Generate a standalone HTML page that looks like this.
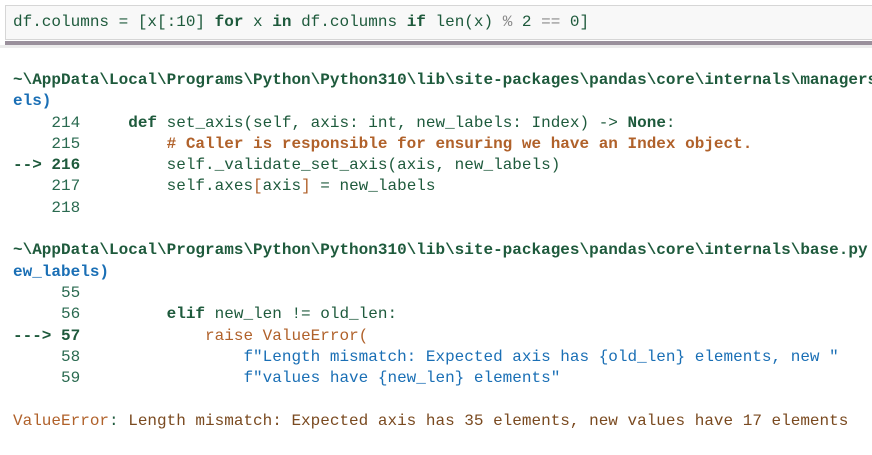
<!DOCTYPE html>
<html><head><meta charset="utf-8"><style>
html,body{margin:0;padding:0;background:#fff;width:872px;height:455px;overflow:hidden}
body{font-family:"Liberation Mono",monospace;font-size:16px}
.inp{position:absolute;left:5px;top:5px;width:880px;height:35px;border:1px solid #d6d6d6;background:#f8f8f8;box-sizing:border-box}
.inp pre{margin:0;position:absolute;left:7px;top:7px;color:#1e5a3c}
.bar{position:absolute;left:5px;top:41px;width:880px;height:4px;background:#9a909c}
.bar2{position:absolute;left:0;top:45px;width:872px;height:3px;background:#ececec}
pre{font-family:inherit;font-size:16px;margin:0}
.out{position:absolute;left:13px;top:70px;line-height:21.3px;color:#1e5a3c;white-space:pre}
.g{color:#1e5a3c}.b{color:#1a6fb5}.o{color:#b0612a}.k{color:#1e5a3c;font-weight:bold}
.ln{color:#2a6a50}
.bo{font-weight:bold}
.op{color:#8a8a8a}
</style></head><body>
<div class="inp"><pre>df.columns = [x[:10] <span class="k">for</span> x <span class="k">in</span> df.columns <span class="k">if</span> len(x) <span class="op">%</span> 2 <span class="op">==</span> 0]</pre></div>
<div class="bar"></div><div class="bar2"></div>
<pre class="out"><span class="bo g">~\AppData\Local\Programs\Python\Python310\lib\site-packages\pandas\core\internals\managers.py</span>
<span class="b bo">els)</span>
<span class="ln">    214     </span><span class="k">def</span> set_axis(self, axis: int, new_labels: Index) -&gt; <span class="k">None</span>:
<span class="ln">    215         </span><span class="o bo"># Caller is responsible for ensuring we have an Index object.</span>
<span class="k">--&gt; 216</span>         self._validate_set_axis(axis, new_labels)
<span class="ln">    217         </span>self.axes<span class="o">[</span>axis<span class="o">]</span> = new_labels
<span class="ln">    218</span>

<span class="bo g">~\AppData\Local\Programs\Python\Python310\lib\site-packages\pandas\core\internals\base.py</span>
<span class="b bo">ew_labels)</span>
<span class="ln">     55</span>
<span class="ln">     56         </span><span class="k">elif</span> new_len != old_len:
<span class="k">---&gt; 57</span>             <span class="o">raise ValueError(</span>
<span class="ln">     58                 </span><span class="b">f"Length mismatch: Expected axis has {old_len} elements, new "</span>
<span class="ln">     59                 </span><span class="b">f"values have {new_len} elements"</span>

<span class="o">ValueError</span>: <span class="o" style="color:#7a4a20">Length mismatch: Expected axis has 35 elements, new values have 17 elements</span></pre>
</body></html>
